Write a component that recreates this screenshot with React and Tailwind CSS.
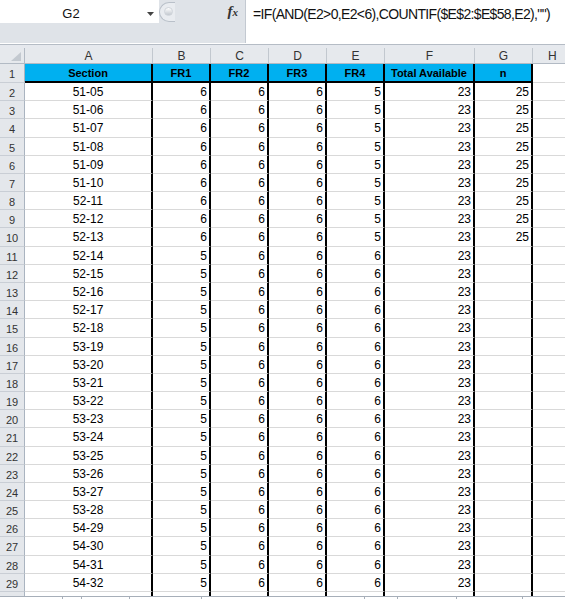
import React from "react";

const COLS = [
  { l: "A", w: "w-[128px]", head: "Section", center: true },
  { l: "B", w: "w-[58px]", head: "FR1" },
  { l: "C", w: "w-[58px]", head: "FR2" },
  { l: "D", w: "w-[58px]", head: "FR3" },
  { l: "E", w: "w-[58px]", head: "FR4" },
  { l: "F", w: "w-[90px]", head: "Total Available" },
  { l: "G", w: "w-[58px]", head: "n" },
];

const SECTIONS = [
  "51-05", "51-06", "51-07", "51-08", "51-09", "51-10", "52-11", "52-12", "52-13",
  "52-14", "52-15", "52-16", "52-17", "52-18", "53-19", "53-20", "53-21", "53-22",
  "53-23", "53-24", "53-25", "53-26", "53-27", "53-28", "54-29", "54-30", "54-31", "54-32",
];

const ROWS = SECTIONS.map((s, i) =>
  i < 9 ? [s, 6, 6, 6, 5, 23, 25] : [s, 5, 6, 6, 6, 23, ""]
);

// 28 rows share 509px, so a few rows get 19px
const rowHeight = (i) =>
  Math.round((509 * (i + 1)) / 28) - Math.round((509 * i) / 28);

const cellFont = { fontFamily: '"Liberation Sans", Arial, sans-serif' };

function RowHead({ n }) {
  return (
    <div className="w-[25px] shrink-0 bg-[#e4e7eb] border-r border-r-[#aab4c0] border-b border-b-[#c9ced5] text-center text-[11px] text-[#333] leading-[17px] pt-[2px] overflow-hidden">
      {n}
    </div>
  );
}

export default function App() {
  return (
    <div
      className="w-[565px] h-[599px] overflow-hidden bg-white flex flex-col text-black"
      style={cellFont}
    >
      {/* formula bar */}
      <div className="h-[43px] shrink-0 flex bg-[#dfe3e8]">
        <div className="w-[245px] shrink-0 flex flex-col">
          <div className="h-[23px] flex">
            <div className="w-[159px] shrink-0 bg-white flex items-start">
              <div className="w-[142px] text-center text-[13px] leading-[23px] pt-[2px] text-[#111]">
                G2
              </div>
              <svg width="8" height="6" viewBox="0 0 8 6" className="mt-[11px] ml-[5px]">
                <path d="M0 1 L7 1 L3.5 5 Z" fill="#444" />
              </svg>
            </div>
            <div className="flex-1 flex items-center">
              <div className="h-[20px] w-[16px] rounded-l-full border-l border-t border-b border-[#b9c0c9] bg-[#e9ecf0] flex items-center justify-end pr-[2px]">
                <div className="w-[9px] h-[9px] rounded-full bg-gradient-to-b from-white to-[#c2c8cf] border border-[#cfd4da]" />
              </div>
              <div className="flex-1" />
              <span
                className="mr-[7px] text-[15px] font-bold italic text-[#333] leading-none"
                style={{ fontFamily: '"Liberation Serif", serif' }}
              >
                f<span className="text-[11px]">x</span>
              </span>
            </div>
          </div>
          <div className="flex-1" />
        </div>
        <div className="flex-1 bg-white border-l border-l-[#c3c9d1] pl-[7px] pt-[4px] text-[14px] tracking-[-0.65px] leading-[20px] whitespace-nowrap text-[#111]">
          =IF(AND(E2&gt;0,E2&lt;6),COUNTIF($E$2:$E$58,E2),"")
        </div>
      </div>

      {/* separator */}
      <div className="h-[5px] shrink-0 border-t border-t-white bg-[#e6e9ee] flex flex-col">
        <div className="h-px bg-[#b5bcc5]" />
      </div>

      {/* column headers */}
      <div className="h-[16px] shrink-0 flex bg-[#e6e9ed] border-b border-b-[#b2bac4] text-[12px] text-[#333]">
        <div className="w-[25px] shrink-0 border-r border-r-[#b2bac4] flex items-end justify-end pr-[3px] pb-[2px]">
          <svg width="10" height="9" viewBox="0 0 10 9">
            <path d="M10 0 L10 9 L0 9 Z" fill="#c3c9d0" />
          </svg>
        </div>
        {COLS.map((c) => (
          <div
            key={c.l}
            className={`${c.w} shrink-0 border-r border-r-[#c2c8cf] text-center leading-[15px] pt-[1px] overflow-hidden`}
          >
            {c.l}
          </div>
        ))}
        <div className="flex-1 pl-[15px] leading-[15px] pt-[1px] overflow-hidden">H</div>
      </div>

      {/* row 1 */}
      <div className="h-[19px] shrink-0 flex">
        <RowHead n={1} />
        {COLS.map((c) => (
          <div
            key={c.l}
            className={`${c.w} shrink-0 bg-[#00b0f0] border-r-2 border-r-black border-b-2 border-b-black text-center text-[11px] font-bold leading-[17px] pt-[1px] overflow-hidden whitespace-nowrap`}
          >
            {c.head}
          </div>
        ))}
        <div className="flex-1 border-b border-b-[#d9d9d9]" />
      </div>

      {/* data rows */}
      {ROWS.map((r, i) => (
        <div key={i} className="shrink-0 flex" style={{ height: rowHeight(i) }}>
          <RowHead n={i + 2} />
          {COLS.map((c, j) => (
            <div
              key={c.l}
              className={`${c.w} shrink-0 flex ${c.center ? "justify-center" : "justify-end pr-[2px]"} border-r-2 border-r-black border-b border-b-[#d9d9d9] text-[12px] leading-[17px] pt-[1px] overflow-hidden`}
            >
              {r[j]}
            </div>
          ))}
          <div className="flex-1 border-b border-b-[#d9d9d9]" />
        </div>
      ))}

      {/* partial row 30 */}
      <div className="h-[4px] shrink-0 flex">
        <div className="w-[25px] shrink-0 bg-[#e4e7eb] border-r border-r-[#aab4c0]" />
        {COLS.map((c) => (
          <div key={c.l} className={`${c.w} shrink-0 border-r-2 border-r-black`} />
        ))}
        <div className="flex-1" />
      </div>

      {/* scroll strip */}
      <div className="flex-1 flex border-t border-t-[#a7afb9] bg-white">
        <div className="w-[63px] border-r border-r-[#a7afb9]" />
        <div className="w-[19px] border-r border-r-[#a7afb9]" />
        <div className="w-[48px] border-r border-r-[#a7afb9]" />
        <div className="w-[72px] border-r border-r-[#a7afb9]" />
        <div className="w-[163px] border-r border-r-[#a7afb9]" />
        <div className="w-[33px] border-r border-r-[#a7afb9]" />
        <div className="w-[59px] border-r border-r-[#a7afb9]" />
        <div className="w-[66px] border-r border-r-[#a7afb9]" />
        <div className="flex-1" />
      </div>
    </div>
  );
}
